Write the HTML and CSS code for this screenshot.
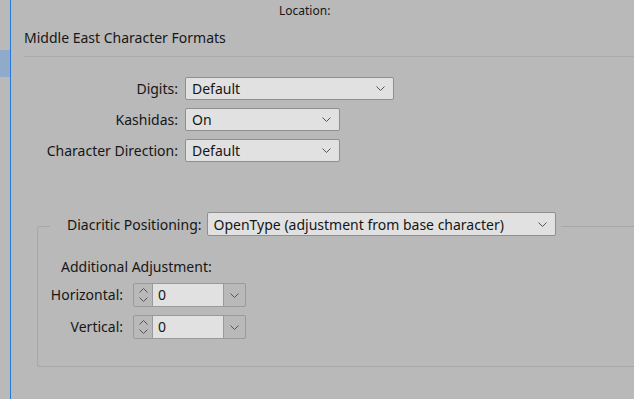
FILE: index.html
```html
<!DOCTYPE html>
<html lang="en">
<head>
    <meta charset="UTF-8">
    <title>Middle East Character Formats</title>
    <link rel="stylesheet" href="styles.css">
</head>
<body>
    <div class="rail">
        <div class="rail-active"></div>
    </div>

    <div class="panel">
        <div class="topbar">Location:</div>
        <div class="heading">Middle East Character Formats</div>

        <div class="form-grid">
            <label>Digits:</label>
            <div class="select select-wide">
                <span>Default</span>
                <svg class="chev" viewBox="0 0 9 5"><polyline points="0.5,0.5 4.5,4.5 8.5,0.5"/></svg>
            </div>

            <label>Kashidas:</label>
            <div class="select">
                <span>On</span>
                <svg class="chev" viewBox="0 0 9 5"><polyline points="0.5,0.5 4.5,4.5 8.5,0.5"/></svg>
            </div>

            <label>Character Direction:</label>
            <div class="select">
                <span>Default</span>
                <svg class="chev" viewBox="0 0 9 5"><polyline points="0.5,0.5 4.5,4.5 8.5,0.5"/></svg>
            </div>
        </div>

        <fieldset class="group">
            <legend class="group-legend">
                <span class="legend-label">Diacritic Positioning:</span>
                <div class="select select-long">
                    <span>OpenType (adjustment from base character)</span>
                    <svg class="chev" viewBox="0 0 9 5"><polyline points="0.5,0.5 4.5,4.5 8.5,0.5"/></svg>
                </div>
            </legend>

            <div class="group-body">
                <div class="sub-title">Additional Adjustment:</div>
                <div class="adjust-grid">
                    <label>Horizontal:</label>
                    <div class="spinner">
                        <div class="spin-btn">
                            <svg viewBox="0 0 9 5"><polyline points="0.5,4.5 4.5,0.5 8.5,4.5"/></svg>
                            <svg viewBox="0 0 9 5"><polyline points="0.5,0.5 4.5,4.5 8.5,0.5"/></svg>
                        </div>
                        <div class="spin-value">0</div>
                        <div class="spin-drop">
                            <svg class="chev" viewBox="0 0 9 5"><polyline points="0.5,0.5 4.5,4.5 8.5,0.5"/></svg>
                        </div>
                    </div>

                    <label>Vertical:</label>
                    <div class="spinner">
                        <div class="spin-btn">
                            <svg viewBox="0 0 9 5"><polyline points="0.5,4.5 4.5,0.5 8.5,4.5"/></svg>
                            <svg viewBox="0 0 9 5"><polyline points="0.5,0.5 4.5,4.5 8.5,0.5"/></svg>
                        </div>
                        <div class="spin-value">0</div>
                        <div class="spin-drop">
                            <svg class="chev" viewBox="0 0 9 5"><polyline points="0.5,0.5 4.5,4.5 8.5,0.5"/></svg>
                        </div>
                    </div>
                </div>
            </div>
        </fieldset>
    </div>
</body>
</html>
```

FILE: styles.css
```css
* {
    box-sizing: border-box;
}
body {
    margin: 0;
    width: 634px;
    height: 399px;
    overflow: hidden;
    display: flex;
    background: #b9b9b9;
    color: #161616;
    font-family: "Noto Sans", "Open Sans", sans-serif;
    font-size: 14px;
}
.rail {
    width: 11px;
    flex-shrink: 0;
    border-right: 1px solid #2479dc;
}
.rail-active {
    margin-top: 50px;
    height: 27px;
    background: #8faacb;
}
.panel {
    flex: 1;
    min-width: 0;
}
.topbar {
    height: 24px;
    padding: 2px 0 0 268px;
    line-height: 18px;
    font-size: 12px;
}
.heading {
    height: 33px;
    margin-left: 13px;
    padding-top: 5px;
    line-height: 18px;
    border-bottom: 1px solid #acacac;
}
.form-grid {
    display: grid;
    grid-template-columns: 167px auto;
    column-gap: 7px;
    row-gap: 8px;
    margin-top: 20px;
    justify-items: start;
}
.form-grid label {
    justify-self: end;
    line-height: 23px;
}
.select {
    display: flex;
    align-items: center;
    justify-content: space-between;
    width: 155px;
    height: 23px;
    padding: 0 8px 0 6px;
    background: #e1e1e1;
    border: 1px solid #8f8f8f;
    border-radius: 2px;
}
.select-wide {
    width: 209px;
}
.select-long {
    width: 349px;
    height: 24px;
}
.chev {
    width: 9px;
    height: 5px;
    fill: none;
    stroke: #555;
    stroke-width: 1;
}
.group {
    margin: 50px -10px 0 26px;
    padding: 0;
    height: 155px;
    border: 1px solid #a7a7a7;
    border-right: none;
    border-radius: 3px;
}
.group-legend {
    display: flex;
    align-items: center;
    margin-left: 12px;
    padding: 0 5px 4px 17px;
}
.legend-label {
    margin-right: 5px;
}
.group-body {
    padding: 18px 0 0 23px;
}
.sub-title {
    line-height: 18px;
}
.adjust-grid {
    display: grid;
    grid-template-columns: 85px auto;
    column-gap: 10px;
    row-gap: 8px;
    margin: 7px 0 0 -23px;
    justify-items: start;
}
.adjust-grid label {
    justify-self: end;
    line-height: 24px;
}
.spinner {
    display: flex;
    width: 113px;
    height: 24px;
    border: 1px solid #9a9a9a;
    border-radius: 2px;
}
.spin-btn {
    width: 19px;
    display: flex;
    flex-direction: column;
    align-items: center;
    justify-content: center;
    gap: 4px;
    border-right: 1px solid #9a9a9a;
}
.spin-btn svg {
    width: 9px;
    height: 5px;
    fill: none;
    stroke: #555;
    stroke-width: 1;
}
.spin-value {
    width: 70px;
    padding-left: 5px;
    line-height: 22px;
    background: #e1e1e1;
}
.spin-drop {
    flex: 1;
    display: flex;
    align-items: center;
    justify-content: center;
    border-left: 1px solid #9a9a9a;
}
```
